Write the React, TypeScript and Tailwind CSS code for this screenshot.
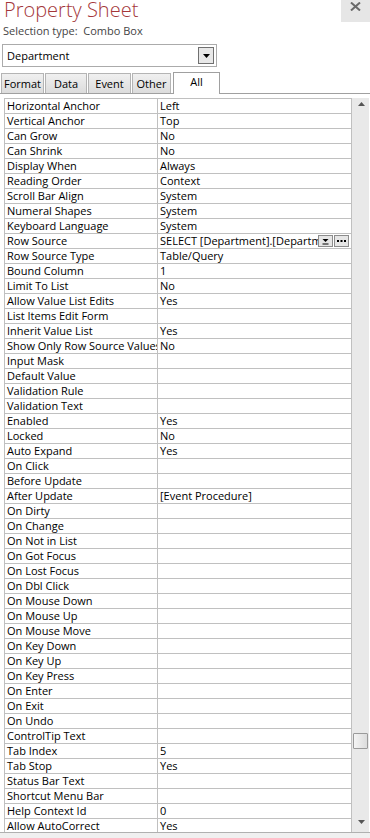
import React from "react";

const rows: [string, string][] = [
  ["Horizontal Anchor", "Left"],
  ["Vertical Anchor", "Top"],
  ["Can Grow", "No"],
  ["Can Shrink", "No"],
  ["Display When", "Always"],
  ["Reading Order", "Context"],
  ["Scroll Bar Align", "System"],
  ["Numeral Shapes", "System"],
  ["Keyboard Language", "System"],
  ["Row Source", "SELECT [Department].[Departm"],
  ["Row Source Type", "Table/Query"],
  ["Bound Column", "1"],
  ["Limit To List", "No"],
  ["Allow Value List Edits", "Yes"],
  ["List Items Edit Form", ""],
  ["Inherit Value List", "Yes"],
  ["Show Only Row Source Values", "No"],
  ["Input Mask", ""],
  ["Default Value", ""],
  ["Validation Rule", ""],
  ["Validation Text", ""],
  ["Enabled", "Yes"],
  ["Locked", "No"],
  ["Auto Expand", "Yes"],
  ["On Click", ""],
  ["Before Update", ""],
  ["After Update", "[Event Procedure]"],
  ["On Dirty", ""],
  ["On Change", ""],
  ["On Not in List", ""],
  ["On Got Focus", ""],
  ["On Lost Focus", ""],
  ["On Dbl Click", ""],
  ["On Mouse Down", ""],
  ["On Mouse Up", ""],
  ["On Mouse Move", ""],
  ["On Key Down", ""],
  ["On Key Up", ""],
  ["On Key Press", ""],
  ["On Enter", ""],
  ["On Exit", ""],
  ["On Undo", ""],
  ["ControlTip Text", ""],
  ["Tab Index", "5"],
  ["Tab Stop", "Yes"],
  ["Status Bar Text", ""],
  ["Shortcut Menu Bar", ""],
  ["Help Context Id", "0"],
  ["Allow AutoCorrect", "Yes"],
];

const tabs = ["Format", "Data", "Event", "Other"];
const tabW = ["w-[43px]", "w-[42px]", "w-[43px]", "w-[39px]"];

export default function App() {
  return (
    <div
      className="w-[370px] h-[838px] bg-white overflow-hidden relative text-black"
      style={{ fontFamily: '"Open Sans", "Noto Sans", sans-serif' }}
    >
      {/* header */}
      <div className="flex h-[22px]">
        <div className="flex-1 pl-[4px] text-[20px] leading-[22px] font-light text-[#a4373a] -mt-[1px]">
          Property Sheet
        </div>
        <div className="w-[29px] h-[22px] bg-[#e6e6e6] flex items-start justify-center pt-[2px]">
          <svg width="11" height="9" viewBox="0 0 11 9">
            <path d="M1 0.5 L10 8.5 M10 0.5 L1 8.5" stroke="#6a6a6a" strokeWidth="2" />
          </svg>
        </div>
      </div>
      <div className="h-[20px] pl-[3px] text-[11px] leading-[18px] text-[#444]">
        Selection type:&nbsp;&nbsp;Combo Box
      </div>
      {/* dropdown */}
      <div className="ml-[2px] mt-[2px] w-[215px] h-[23px] border border-[#ababab] flex items-center">
        <div className="flex-1 pl-[4px] text-[11px] leading-[20px]">Department</div>
        <div className="w-[16px] h-[17px] mr-[2px] border border-[#707070] bg-[#e8e8e8] flex items-center justify-center">
          <svg width="7" height="4" viewBox="0 0 7 4">
            <path d="M0 0 H7 L3.5 4 Z" fill="#000" />
          </svg>
        </div>
      </div>
      {/* tabs */}
      <div className="mt-[4px] flex items-end h-[22px] pl-[1px]">
        {tabs.map((t, i) => (
          <div
            key={t}
            className={`${tabW[i]} h-[20px] mr-[1px] border border-b-0 border-[#b4b4b4] bg-gradient-to-b from-[#f0f0f0] to-[#dcdcdc] text-[11px] leading-[19px] text-center`}
          >
            {t}
          </div>
        ))}
        <div className="w-[47px] h-[22px] ml-[1px] border border-b-0 border-[#a0a0a0] bg-white text-[11px] leading-[17px] text-center relative top-[1px]">
          All
        </div>
      </div>
      {/* pane */}
      <div className="border-t border-[#a0a0a0] pt-[4px]">
        <div className="flex ml-[4px]">
          <div className="w-[348px] border-t border-l border-[#c0c0c0]">
            {rows.map(([k, v]) => (
              <div key={k} className="flex h-[15px] border-b border-[#c0c0c0] text-[11px] leading-[14px]">
                <div className="w-[153px] pl-[2px] border-r border-[#c0c0c0] whitespace-nowrap overflow-hidden">
                  {k}
                </div>
                <div className="flex-1 pl-[2px] border-r border-[#c0c0c0] whitespace-nowrap overflow-hidden flex items-center">
                  {k === "Row Source" ? (
                    <>
                      <div className="flex-1 overflow-hidden">{v}</div>
                      <div className="w-[15px] h-[12px] border border-[#8c8c8c] bg-[#e6e6e6] flex flex-col items-center justify-end pb-[1px]">
                        <svg width="7" height="6" viewBox="0 0 7 6">
                          <path d="M0.5 0 H6.5 L3.5 3 Z" fill="#000" />
                          <rect x="0.5" y="4.5" width="6" height="1" fill="#000" />
                        </svg>
                      </div>
                      <div className="w-[15px] h-[12px] ml-[1px] mr-[2px] border border-[#8c8c8c] bg-[#e6e6e6] flex items-center justify-center">
                        <svg width="9" height="2" viewBox="0 0 9 2">
                          <rect x="0" y="0" width="2" height="2" fill="#000" />
                          <rect x="3.5" y="0" width="2" height="2" fill="#000" />
                          <rect x="7" y="0" width="2" height="2" fill="#000" />
                        </svg>
                      </div>
                    </>
                  ) : (
                    v
                  )}
                </div>
              </div>
            ))}
          </div>
          {/* scrollbar */}
          <div className="w-[17px] h-[735px] bg-[#e9e9e9] relative -mt-[0px]">
            <svg className="absolute left-[6px] top-[4px]" width="7" height="4" viewBox="0 0 7 4">
              <path d="M3.5 0 L7 4 H0 Z" fill="#555" />
            </svg>
            <div className="absolute left-[1px] top-[635px] w-[15px] h-[16px] border border-[#9a9a9a] rounded-[1px] bg-gradient-to-r from-[#f4f4f4] to-[#dcdcdc]" />
            <svg className="absolute left-[6px] top-[722px]" width="7" height="4" viewBox="0 0 7 4">
              <path d="M0 0 H7 L3.5 4 Z" fill="#555" />
            </svg>
          </div>
        </div>
      </div>
      <div className="absolute left-0 right-0 bottom-0 h-[6px] bg-[#f0f0f0] border-t border-[#b0b0b0]" />
    </div>
  );
}
